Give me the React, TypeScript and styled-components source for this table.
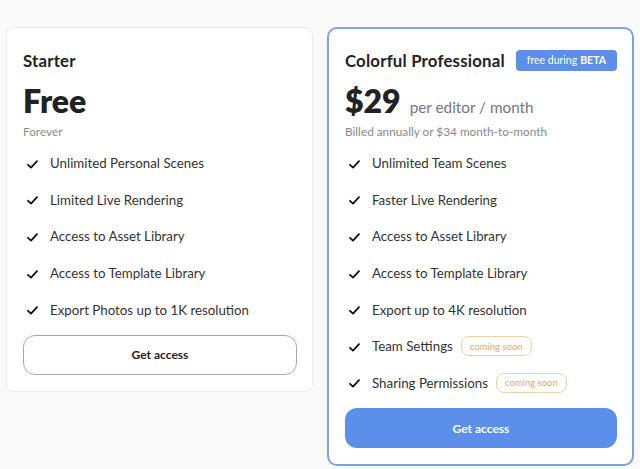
import React from "react";
import styled, { createGlobalStyle } from "styled-components";

const Global = createGlobalStyle`
  html, body { margin: 0; padding: 0; background: #fafafa; }
  body { font-family: Lato, "Open Sans", sans-serif; color: #222; }
`;

const Page = styled.div`
  display: flex;
  align-items: flex-start;
  gap: 14px;
  padding: 27px 0 0 6px;
  width: 640px;
  height: 469px;
  box-sizing: border-box;
`;

const Card = styled.div<{ $featured?: boolean }>`
  width: 307px;
  box-sizing: border-box;
  background: #fff;
  border-radius: ${(p) => (p.$featured ? "10px" : "8px")};
  border: ${(p) => (p.$featured ? "2px solid #7fa3dc" : "1px solid #ececec")};
  padding: ${(p) => (p.$featured ? "20px 15px 16px 16px" : "21px 15px 16px 16px")};
  display: flex;
  flex-direction: column;
`;

const TitleRow = styled.div`
  display: flex;
  align-items: center;
  justify-content: space-between;
  height: 22px;
`;

const Title = styled.div`
  font-size: 16.8px;
  font-weight: 700;
  color: #222;
  letter-spacing: 0.2px;
`;

const Beta = styled.span`
  background: #5b8fea;
  color: #fff;
  font-size: 10.5px;
  border-radius: 4px;
  padding: 0 11px;
  height: 21px;
  display: inline-flex;
  align-items: center;
  gap: 3px;
  b { font-weight: 700; }
`;

const PriceRow = styled.div`
  display: flex;
  align-items: baseline;
  gap: 9px;
  margin-top: 10px;
  height: 36px;
`;

const Price = styled.span`
  font-size: 32px;
  font-weight: 800;
  color: #222;
`;

const PriceNote = styled.span`
  font-size: 15.3px;
  color: #777;
`;

const Sub = styled.div`
  font-size: 11.8px;
  color: #8a8a8a;
  margin-top: 7px;
`;

const Features = styled.ul`
  list-style: none;
  margin: 6px 0 0 0;
  padding: 0;
  display: flex;
  flex-direction: column;
`;

const Feature = styled.li`
  display: flex;
  align-items: center;
  height: 36.6px;
  font-size: 13.3px;
  color: #333;
`;

const Check = styled.svg`
  width: 11px;
  height: 9px;
  margin: 2px 12px 0 4px;
  flex: none;
`;

const Soon = styled.span`
  margin-left: 8px;
  border: 1px solid #f0cfa6;
  color: #e4a86b;
  border-radius: 8px;
  font-size: 9.5px;
  height: 18px;
  padding: 0 8px;
  display: inline-flex;
  align-items: center;
`;

const Button = styled.button<{ $primary?: boolean }>`
  margin-top: 7px;
  height: 40px;
  width: 100%;
  border-radius: 12px;
  font-family: inherit;
  font-size: 12px;
  font-weight: 700;
  cursor: pointer;
  background: ${(p) => (p.$primary ? "#5b8fea" : "#fff")};
  color: ${(p) => (p.$primary ? "#fff" : "#222")};
  border: ${(p) => (p.$primary ? "none" : "1px solid #a9a9a9")};
`;

const CheckIcon = () => (
  <Check viewBox="0 0 11 9">
    <polyline points="1,4.8 4,7.6 10,1.2" fill="none" stroke="#111" strokeWidth="1.8" strokeLinecap="round" strokeLinejoin="round" />
  </Check>
);

const starter = [
  "Unlimited Personal Scenes",
  "Limited Live Rendering",
  "Access to Asset Library",
  "Access to Template Library",
  "Export Photos up to 1K resolution",
];

const pro: { t: string; soon?: boolean }[] = [
  { t: "Unlimited Team Scenes" },
  { t: "Faster Live Rendering" },
  { t: "Access to Asset Library" },
  { t: "Access to Template Library" },
  { t: "Export up to 4K resolution" },
  { t: "Team Settings", soon: true },
  { t: "Sharing Permissions", soon: true },
];

export default function App() {
  return (
    <>
      <Global />
      <Page>
        <Card>
          <TitleRow>
            <Title>Starter</Title>
          </TitleRow>
          <PriceRow>
            <Price>Free</Price>
          </PriceRow>
          <Sub>Forever</Sub>
          <Features>
            {starter.map((f) => (
              <Feature key={f}>
                <CheckIcon />
                {f}
              </Feature>
            ))}
          </Features>
          <Button>Get access</Button>
        </Card>
        <Card $featured>
          <TitleRow>
            <Title>Colorful Professional</Title>
            <Beta>
              free during <b>BETA</b>
            </Beta>
          </TitleRow>
          <PriceRow>
            <Price>$29</Price>
            <PriceNote>per editor / month</PriceNote>
          </PriceRow>
          <Sub>Billed annually or $34 month-to-month</Sub>
          <Features>
            {pro.map((f) => (
              <Feature key={f.t}>
                <CheckIcon />
                {f.t}
                {f.soon && <Soon>coming soon</Soon>}
              </Feature>
            ))}
          </Features>
          <Button $primary>Get access</Button>
        </Card>
      </Page>
    </>
  );
}
